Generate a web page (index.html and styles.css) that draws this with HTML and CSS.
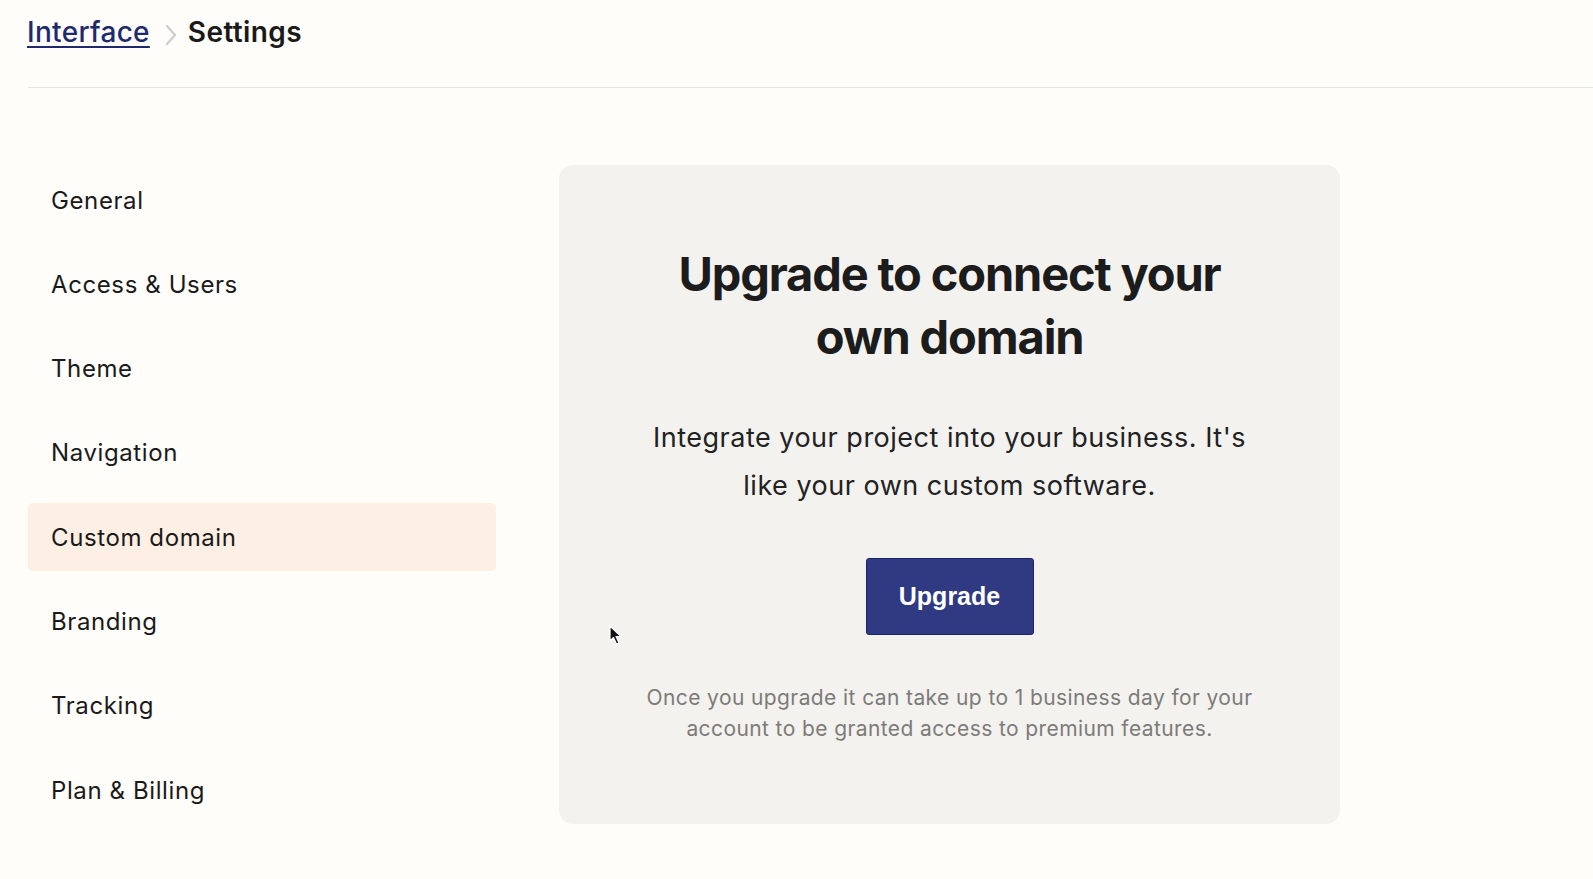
FILE: index.html
```html
<!DOCTYPE html>
<html lang="en">
<head>
    <meta charset="UTF-8">
    <meta name="viewport" content="width=device-width, initial-scale=1.0">
    <title>Settings</title>
    <link rel="stylesheet" href="styles.css">
</head>
<body>
    <header class="topbar">
        <a href="#" class="crumb-link">Interface</a>
        <svg class="crumb-sep" width="14" height="24" viewBox="0 0 14 24" fill="none">
            <path d="M3 3 L11 12 L3 21" stroke="#cfcfcf" stroke-width="2.4" stroke-linecap="round" stroke-linejoin="round"/>
        </svg>
        <span class="crumb-current">Settings</span>
    </header>

    <main class="layout">
        <nav class="sidebar">
            <a href="#" class="nav-item">General</a>
            <a href="#" class="nav-item">Access &amp; Users</a>
            <a href="#" class="nav-item">Theme</a>
            <a href="#" class="nav-item">Navigation</a>
            <a href="#" class="nav-item active">Custom domain</a>
            <a href="#" class="nav-item">Branding</a>
            <a href="#" class="nav-item">Tracking</a>
            <a href="#" class="nav-item">Plan &amp; Billing</a>
        </nav>

        <section class="card">
            <h1>Upgrade to connect your own domain</h1>
            <p class="lead">Integrate your project into your business. It's like your own custom software.</p>
            <button class="btn-upgrade">Upgrade</button>
            <p class="note">Once you upgrade it can take up to 1 business day for your account to be granted access to premium features.</p>
        </section>
    </main>

    <svg class="cursor" width="14" height="22" viewBox="0 0 14 22">
        <path d="M1 1 L1 16 L4.5 12.5 L7.5 19 L10 18 L7 11.5 L12 11.5 Z" fill="#111" stroke="#fff" stroke-width="1.2" stroke-linejoin="round"/>
    </svg>
</body>
</html>
```

FILE: styles.css
```css
body {
    margin: 0;
    padding: 0;
    background-color: #fefdf9;
    font-family: Inter, "Noto Sans", sans-serif;
    color: #1c1c1c;
    position: relative;
    min-height: 879px;
}

.topbar {
    display: flex;
    align-items: flex-start;
    height: 88px;
    margin-left: 28px;
    padding-top: 15px;
    border-bottom: 1px solid #e6e5e1;
    box-sizing: border-box;
}

.crumb-link {
    font-size: 28px;
    font-weight: 500;
    letter-spacing: 0.3px;
    color: #1f2a6e;
    text-decoration: underline;
    text-decoration-thickness: 2px;
    text-underline-offset: 4px;
    margin-left: -1px;
}

.crumb-sep {
    margin: 8px 10px 0 14px;
}

.crumb-current {
    font-size: 28px;
    font-weight: 600;
    letter-spacing: 0.4px;
    color: #1a1a1a;
}

.layout {
    display: flex;
    align-items: flex-start;
    gap: 63px;
    padding: 77px 0 0 28px;
}

.sidebar {
    width: 468px;
    display: flex;
    flex-direction: column;
    gap: 16.3px;
    flex-shrink: 0;
    margin-top: 1px;
}

.nav-item {
    display: flex;
    align-items: center;
    height: 68px;
    padding-left: 23px;
    font-size: 24px;
    letter-spacing: 0.6px;
    color: #1a1a1a;
    text-decoration: none;
    border-radius: 5px;
}

.nav-item.active {
    background-color: #fdefe3;
}

.card {
    width: 781px;
    height: 659px;
    box-sizing: border-box;
    padding: 77px 60px 0;
    background-color: #f3f2ef;
    border-radius: 14px;
    text-align: center;
    display: flex;
    flex-direction: column;
    align-items: center;
}

.card h1 {
    margin: 0;
    width: 600px;
    font-size: 47px;
    font-weight: 700;
    line-height: 63px;
    letter-spacing: -1.15px;
    color: #1c1c1c;
}

.lead {
    margin: 46px 0 0;
    width: 612px;
    font-size: 27px;
    line-height: 48px;
    letter-spacing: 0.5px;
    color: #222;
}

.btn-upgrade {
    margin-top: 48px;
    width: 168px;
    height: 77px;
    background-color: #2f3a82;
    border: 1px solid #1c2566;
    border-radius: 3px;
    color: #fff;
    font-family: "Liberation Sans", Arial, sans-serif;
    font-size: 25px;
    font-weight: 700;
    cursor: pointer;
}

.note {
    margin: 47px 0 0;
    width: 624px;
    font-size: 21px;
    line-height: 31px;
    letter-spacing: 0.4px;
    color: #7d7b78;
}

.cursor {
    position: absolute;
    left: 609px;
    top: 625px;
}
```
